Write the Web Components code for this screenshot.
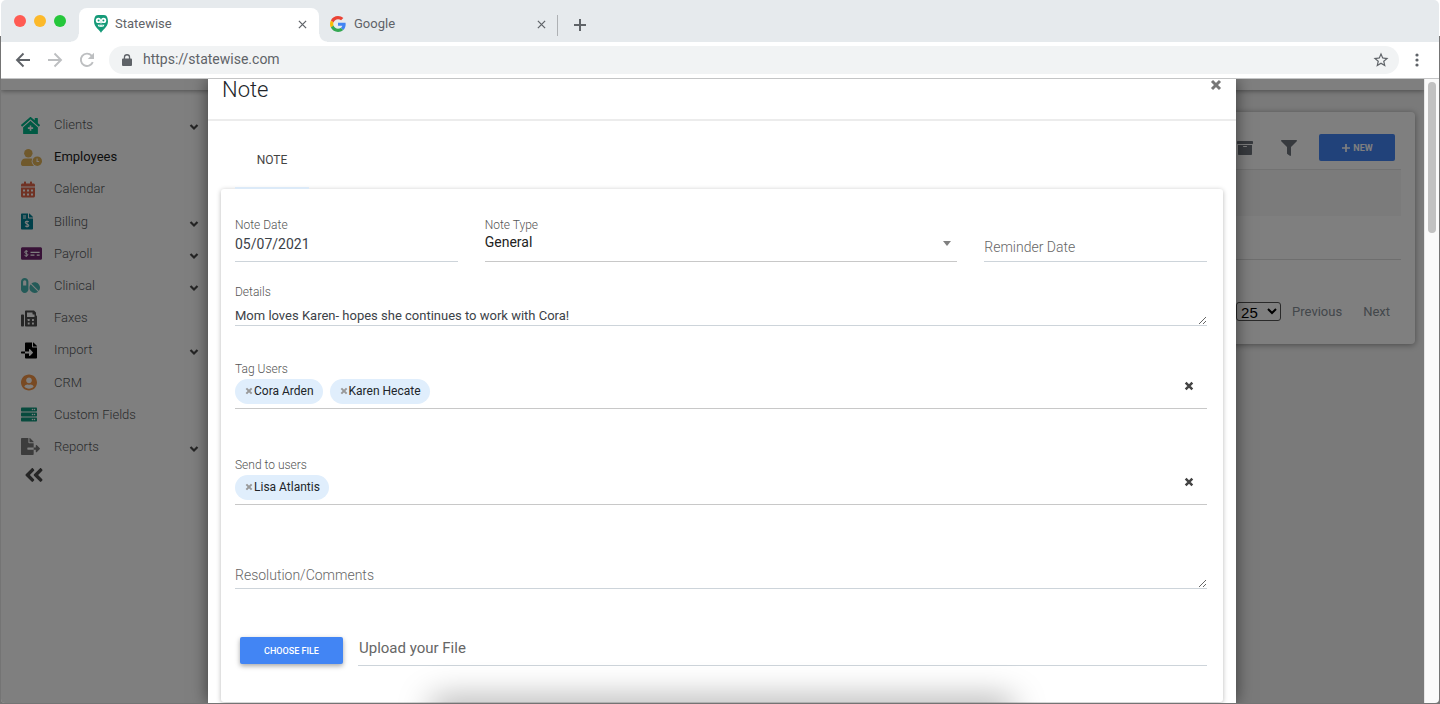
<!DOCTYPE html>
<html lang="en">
<head>
<meta charset="utf-8">
<title>Statewise</title>
<style>
  html, body { margin: 0; height: 100%; }
  body { font-family: Roboto, "Liberation Sans", sans-serif; font-size: 14px; color: #212529; overflow: hidden; background: #fff; }
</style>
</head>
<body>
<sw-window>
  <sw-tab slot="tabs" icon="owl" active>Statewise</sw-tab>
  <sw-tab slot="tabs" icon="google">Google</sw-tab>
  <sw-page>
    <sw-nav slot="nav">
      <sw-nav-item icon="clinic" tint="#00b488" more>Clients</sw-nav-item>
      <sw-nav-item icon="userclock" tint="#e0b258" current>Employees</sw-nav-item>
      <sw-nav-item icon="calendar" tint="#e06448">Calendar</sw-nav-item>
      <sw-nav-item icon="invoice" tint="#008094" more>Billing</sw-nav-item>
      <sw-nav-item icon="check" tint="#70246e" more>Payroll</sw-nav-item>
      <sw-nav-item icon="pills" tint="#49b5b0" more>Clinical</sw-nav-item>
      <sw-nav-item icon="fax" tint="#4c4c4c">Faxes</sw-nav-item>
      <sw-nav-item icon="import" tint="#000000" more>Import</sw-nav-item>
      <sw-nav-item icon="person" tint="#f29446">CRM</sw-nav-item>
      <sw-nav-item icon="server" tint="#11967c">Custom Fields</sw-nav-item>
      <sw-nav-item icon="export" tint="#787878" more>Reports</sw-nav-item>
    </sw-nav>
    <sw-list-card slot="main"></sw-list-card>
    <sw-modal slot="modal" heading="Note">
      <sw-note-form></sw-note-form>
    </sw-modal>
  </sw-page>
</sw-window>

<script>
const dollar = (x, y, s) => `<g transform="translate(${x} ${y}) scale(${s})" fill="none" stroke="#fff" stroke-width="34"><path d="M60-70C40-95-60-100-60-48S65-5 62 48 -45 95-65 62M0-120V120"/></g>`;
const dots = (xs, ys, s) => ys.map(y => xs.map(x => `<rect x="${x}" y="${y}" width="${s}" height="${s}" rx="8" fill="#fff"/>`).join('')).join('');
const ICONS = {
  clinic: ['0 0 576 512', '<path d="M288 115 69.500 307.700c-1.600 1.500-3.700 2.100-5.500 3.400V496a16 16 0 0 0 16 16h416a16 16 0 0 0 16-16V311.100c-1.700-1.200-3.700-1.800-5.300-3.200z"/><path d="M570.700 236.300 512 184.400V48a16 16 0 0 0-16-16h-64a16 16 0 0 0-16 16v51.700L314.800 10.300C308.500 4.600 296.500 0 288 0s-20.500 4.600-26.700 10.300l-256 226A18 18 0 0 0 0 248.200a18.600 18.600 0 0 0 4.100 10.700L25.500 282.700a21 21 0 0 0 12 5.300 18.700 18.700 0 0 0 10.700-4.100L277.300 81.600a16 16 0 0 1 21.200 0L527.900 283.900a18.200 18.200 0 0 0 22.600-1.400l21.300-23.800a21 21 0 0 0 4.200-10.600 18.600 18.600 0 0 0-5.300-11.800z"/><path d="M288 92 56 298" fill="none" stroke="#fff" stroke-width="16"/><path d="M288 92l232 206" fill="none" stroke="#fff" stroke-width="16"/><path d="M264 256h48v56h56v48h-56v56h-48v-56h-56v-48h56z" fill="#fff"/>'],
  userclock: ['0 0 640 512', '<circle cx="224" cy="128" r="128"/><path d="M0 464v-42c0-74 60-134 134-134h180c30 0 60 10 82 28v196H48c-26 0-48-22-48-48z"/><circle cx="496" cy="368" r="172" fill="#fff"/><circle cx="496" cy="368" r="144"/><path d="M490 290v86h62" fill="none" stroke="#fff" stroke-width="34"/>'],
  calendar: ['0 0 448 512', '<path d="M0 464c0 26.500 21.500 48 48 48h352c26.500 0 48-21.500 48-48V192H0zM400 64h-48V16c0-8.800-7.200-16-16-16h-32c-8.800 0-16 7.200-16 16v48H160V16c0-8.800-7.200-16-16-16h-32c-8.800 0-16 7.200-16 16v48H48C21.500 64 0 85.500 0 112v48h448v-48c0-26.500-21.500-48-48-48z"/>' + dots([64, 192, 320], [256, 384], 64)],
  invoice: ['0 0 384 512', '<path d="M377 105 279.100 7c-4.500-4.500-10.600-7-17-7H256v128h128v-6.100c0-6.300-2.500-12.400-7-16.900zM224 136V0H24C10.700 0 0 10.700 0 24v464c0 13.300 10.700 24 24 24h336c13.300 0 24-10.700 24-24V160H248c-13.200 0-24-10.800-24-24z"/><path d="M64 64h96v32H64zM64 128h96v32H64z" fill="#fff"/>' + dollar(192, 335, 0.95)],
  check: ['0 0 640 512', '<path d="M0 112c0-26 16-48 36-48h568c20 0 36 22 36 48v288c0 26-16 48-36 48H36c-20 0-36-22-36-48z"/><path d="M290 205h278v36H290zM290 290h120v34H290zM480 290h88v34h-88z" fill="#fff"/>' + dollar(160, 256, 0.85)],
  pills: ['0 0 576 512', '<path d="M112 32C50 32 0 82 0 144v224c0 62 50 112 112 112s112-50 112-112V144c0-62-50-112-112-112z"/><path d="M64 256V144a48 48 0 0 1 96 0v112z" fill="#fff"/><path d="M299.700 226.300c-3.500-3.500-9.500-3-12.400.8-45.500 62.400-40.400 150.100 15.900 206.400 56.300 56.300 144 61.400 206.400 15.900 4-2.900 4.300-8.900.8-12.400zm229.800-19c-56.300-56.300-144-61.400-206.400-15.900-4 2.900-4.300 8.900-.8 12.400l210.800 210.700c3.500 3.500 9.500 3 12.400-.8 45.400-62.300 40.300-150.100-16-206.400z"/>'],
  fax: ['0 0 512 512', '<path d="M64 128H32c-17.700 0-32 14.300-32 32v320c0 17.700 14.300 32 32 32h32c17.700 0 32-14.300 32-32V160c0-17.700-14.300-32-32-32zM480 160V77.300c0-8.500-3.400-16.600-9.400-22.600L425.400 9.400c-6-6-14.200-9.400-22.600-9.400H160c-17.700 0-32 14.300-32 32v448c0 17.700 14.300 32 32 32h320c17.700 0 32-14.300 32-32V192c0-17.700-14.300-32-32-32z"/><path d="M192 64h176v48c0 9 7 16 16 16h48v80H192z" fill="#fff"/>' + dots([216, 352], [272, 384], 60)],
  import: ['0 0 512 512', '<path d="M16 288c-8.800 0-16 7.200-16 16v32c0 8.800 7.200 16 16 16h112v-64zm489-183L407.100 7c-4.500-4.500-10.600-7-17-7H384v128h128v-6.100c0-6.300-2.500-12.400-7-16.900zm-153 31V0H152c-13.300 0-24 10.700-24 24v264h128v-65.200c0-14.300 17.300-21.400 27.400-11.300L379 308c6.600 6.700 6.600 17.400 0 24l-95.700 96.400c-10.100 10.100-27.400 3-27.400-11.300V352H128v136c0 13.300 10.700 24 24 24h336c13.300 0 24-10.700 24-24V160H376c-13.200 0-24-10.800-24-24z"/>'],
  person: ['0 0 496 512', '<path d="M248 8C111 8 0 119 0 256s111 248 248 248 248-111 248-248S385 8 248 8zm0 96c48.600 0 88 39.400 88 88s-39.400 88-88 88-88-39.400-88-88 39.400-88 88-88zm0 344c-58.700 0-111.300-26.600-146.500-68.200 18.800-35.400 55.600-59.800 98.500-59.800 2.400 0 4.800.4 7.100 1.100 13 4.200 26.600 6.900 40.900 6.900 14.300 0 28-2.700 40.900-6.900 2.300-.7 4.700-1.100 7.100-1.100 42.900 0 79.700 24.400 98.500 59.800C359.300 421.400 306.700 448 248 448z"/>'],
  server: ['0 0 512 512', [32, 192, 352].map(y => `<rect y="${y}" width="512" height="128" rx="26"/><circle cx="368" cy="${y + 64}" r="24" fill="#fff"/><circle cx="432" cy="${y + 64}" r="24" fill="#fff"/>`).join('')],
  export: ['0 0 576 512', '<path d="M384 121.900c0-6.300-2.500-12.400-7-16.900L279.100 7c-4.500-4.500-10.600-7-17-7H256v128h128zM571 308l-95.700-96.400c-10.100-10.100-27.400-3-27.400 11.300V288h-64v64h64v65.200c0 14.300 17.300 21.400 27.400 11.300L571 332c6.600-6.600 6.600-17.400 0-24zm-379 28v-32c0-8.800 7.200-16 16-16h176V160H248c-13.200 0-24-10.800-24-24V0H24C10.700 0 0 10.700 0 24v464c0 13.300 10.700 24 24 24h336c13.300 0 24-10.700 24-24V352H208c-8.800 0-16-7.200-16-16z"/>'],
  collapse: ['0 0 448 512', '<path d="M223.700 239l136-136c9.400-9.400 24.600-9.400 33.900 0l22.600 22.600c9.400 9.400 9.400 24.600 0 33.900L319.900 256l96.400 96.400c9.400 9.400 9.400 24.600 0 33.900L393.700 409c-9.400 9.400-24.600 9.400-33.900 0l-136-136c-9.500-9.400-9.500-24.600-.1-34zm-192 34l136 136c9.400 9.400 24.600 9.400 33.900 0l22.600-22.600c9.400-9.400 9.400-24.600 0-33.900L127.900 256l96.400-96.400c9.400-9.400 9.400-24.600 0-33.900L201.700 103c-9.400-9.400-24.600-9.400-33.900 0l-136 136c-9.500 9.400-9.500 24.600-.1 34z"/>'],
  chevron: ['0 0 10 10', '<path d="M1.500 3 5 6.500 8.500 3" fill="none" stroke="currentColor" stroke-width="2.200"/>'],
  archive: ['0 0 512 512', '<path d="M32 448c0 17.700 14.300 32 32 32h384c17.700 0 32-14.300 32-32V160H32zM480 32H32C14.300 32 0 46.300 0 64v48c0 8.800 7.200 16 16 16h480c8.800 0 16-7.200 16-16V64c0-17.700-14.300-32-32-32z"/><rect x="192" y="192" width="128" height="34" rx="12" fill="#fff"/>'],
  filter: ['0 0 512 512', '<path d="M487.976 0H24.028C2.710 0-8.047 25.866 7.058 40.971L192 225.941V432c0 7.831 3.821 15.170 10.237 19.662l80 55.980C298.020 518.690 320 507.493 320 487.980V225.941l184.947-184.970C520.021 25.896 509.338 0 487.976 0z"/>'],
  plusbold: ['0 0 10 10', '<path d="M5 1v8M1 5h8" fill="none" stroke="currentColor" stroke-width="1.700"/>'],
  timesbold: ['0 0 12 12', '<path d="M2 2l8 8M10 2l-8 8" fill="none" stroke="currentColor" stroke-width="3"/>'],
  close: ['0 0 10 10', '<path d="M1 1l8 8M9 1 1 9" fill="none" stroke="currentColor" stroke-width="1.400"/>'],
  plus: ['0 0 12 12', '<path d="M6 0v12M0 6h12" fill="none" stroke="currentColor" stroke-width="2"/>'],
  back: ['0 0 16 16', '<path d="M15 8H2M8.500 1.500 2 8l6.500 6.500" fill="none" stroke="currentColor" stroke-width="1.900"/>'],
  forward: ['0 0 16 16', '<path d="M1 8h13M7.500 1.500 14 8l-6.500 6.500" fill="none" stroke="currentColor" stroke-width="1.900"/>'],
  reload: ['0 0 16 16', '<path d="M13.800 10.200A6.200 6.200 0 1 1 12.600 3.600L14 5" fill="none" stroke="currentColor" stroke-width="1.900"/><path d="M15 .8V7H8.800z"/>'],
  lock: ['0 0 10 12', '<path d="M1.800 4.500V3.300a3.200 3.200 0 0 1 6.400 0v1.200H9a1 1 0 0 1 1 1V11a1 1 0 0 1-1 1H1a1 1 0 0 1-1-1V5.500a1 1 0 0 1 1-1zm1.300 0h3.800V3.300a1.900 1.900 0 0 0-3.800 0z" fill-rule="evenodd"/>'],
  star: ['0 0 24 24', '<path d="M22 9.240l-7.190-.62L12 2 9.190 8.630 2 9.240l5.460 4.730L5.820 21 12 17.270 18.180 21l-1.630-7.030zM12 15.400l-3.760 2.270 1-4.280-3.320-2.880 4.380-.38L12 6.100l1.710 4.040 4.380.38-3.320 2.880 1 4.280z"/>'],
  menu: ['0 0 4 14', '<circle cx="2" cy="2" r="1.600"/><circle cx="2" cy="7" r="1.600"/><circle cx="2" cy="12" r="1.600"/>'],
  google: ['0 0 48 48', '<path fill="#EA4335" d="M24 9.500c3.540 0 6.710 1.220 9.210 3.600l6.850-6.850C35.900 2.380 30.470 0 24 0 14.620 0 6.510 5.380 2.560 13.220l7.980 6.190C12.430 13.720 17.740 9.500 24 9.500z"/><path fill="#4285F4" d="M46.980 24.550c0-1.570-.15-3.090-.38-4.550H24v9.020h12.940c-.58 2.960-2.260 5.480-4.780 7.180l7.730 6c4.510-4.180 7.090-10.360 7.090-17.650z"/><path fill="#FBBC05" d="M10.530 28.590c-.48-1.450-.76-2.990-.76-4.590s.27-3.140.76-4.590l-7.980-6.190C.92 16.460 0 20.120 0 24c0 3.880.92 7.540 2.560 10.780z"/><path fill="#34A853" d="M24 48c6.480 0 11.930-2.130 15.890-5.810l-7.730-6c-2.150 1.450-4.920 2.300-8.160 2.300-6.260 0-11.570-4.220-13.470-9.910l-7.980 6.190C6.510 42.620 14.620 48 24 48z"/>'],
  owl: ['0 0 14 18', '<path d="M7 18C6.500 15.500 0 12.500 0 6.500 0 3 1.200 1.200 2 .5L4 .1h6l2 .4c.8.700 2 2.500 2 6C14 12.500 7.500 15.500 7 18z" fill="#159a78"/><circle cx="4.400" cy="5.400" r="2.600" fill="#fff"/><circle cx="9.600" cy="5.400" r="2.600" fill="#fff"/><circle cx="4.600" cy="5.600" r="1" fill="#159a78"/><circle cx="9.400" cy="5.600" r="1" fill="#159a78"/><path d="M6 7h2l-1 2z" fill="#fff"/><path d="M3.500 9.800h7L9 12H5z" fill="#fff"/><path d="M5.500 10.500v1M7 10.500v1M8.500 10.500v1" stroke="#159a78" stroke-width=".7"/>']
};

/* Base class: clones the element's template into an open shadow root. */
class SwElement extends HTMLElement {
  connectedCallback() {
    if (this.shadowRoot) return;
    const t = document.createElement('template');
    t.innerHTML = `<style>*{box-sizing:border-box}button{font:inherit;color:inherit;background:none;border:0;padding:0;margin:0;display:inline-flex;align-items:center;justify-content:center}input,select,textarea{font:inherit;color:inherit;border-radius:0;outline:0;margin:0}</style>` + this.render();
    this.attachShadow({ mode: 'open' }).append(t.content.cloneNode(true));
  }
  attr(n) { return this.getAttribute(n) || ''; }
}

customElements.define('sw-icon', class extends SwElement {
  render() {
    const [box, body] = ICONS[this.attr('name')];
    return `<style>:host{display:inline-flex;flex:none}svg{display:block;width:100%;height:100%}</style>
      <svg viewBox="${box}" fill="currentColor" aria-hidden="true">${body}</svg>`;
  }
});

customElements.define('sw-tab', class extends SwElement {
  render() {
    return `<style>
      :host{display:flex;flex:none;align-items:center;width:240px;height:34px;padding:0 12px 2px 14px;box-sizing:border-box;position:relative;color:#5f6368;font-size:13px;line-height:16px}
      :host([active]){background:#fff;border-radius:8px 8px 0 0}
      :host(:not([active])){padding-left:11px;padding-right:11px;width:238px}
      :host([active])::before,:host([active])::after{content:"";position:absolute;bottom:0;width:8px;height:8px}
      :host([active])::before{left:-8px;background:radial-gradient(circle at 0 0,transparent 7px,#fff 8px)}
      :host([active])::after{right:-8px;background:radial-gradient(circle at 100% 0,transparent 7px,#fff 8px)}
      .fav{width:16px;height:18px;margin-right:6px}
      :host(:not([active])) .fav{margin-right:8px}
      .name{flex:1}
      button sw-icon{width:9px;height:9px}
      </style>
      <sw-icon class="fav" name="${this.attr('icon')}"></sw-icon><span class="name"><slot></slot></span>
      <button aria-label="Close tab"><sw-icon name="close"></sw-icon></button>`;
  }
});

customElements.define('sw-window', class extends SwElement {
  render() {
    return `<style>
      :host{display:flex;flex-direction:column;height:100vh;box-sizing:border-box;padding:0 1px 1px;background:linear-gradient(#fff 36px,#747474 36px)}
      .strip{display:flex;flex:none;height:42px;background:#e6eaed;border-radius:5px 5px 0 0;align-items:flex-end}
      .lights{display:flex;gap:8px;align-self:center;padding:0 19px 0 13px;width:78px}
      .lights i{width:12px;height:12px;border-radius:50%;flex:none}
      .sep{width:1px;height:21px;background:#aeb1b4;margin-bottom:6px}
      .add{height:34px;width:44px;color:#5f6368}
      .add sw-icon{width:12px;height:12px}
      .bar{display:flex;flex:none;height:37px;background:#fff;border-bottom:1px solid #c4c5c6;align-items:center;padding:0 20px 0 14px;color:#5f6368}
      .bar button{width:16px;height:16px}
      .bar button+button{margin-left:16px}
      .dim{color:#bdbfc1}
      .bar sw-icon{width:16px;height:16px}
      .omni{flex:1;display:flex;align-items:center;height:28px;border-radius:14px;background:#f1f3f4;margin:0 16px 0 14px;padding:0 10px 0 13px}
      .omni sw-icon{width:10px;height:12px}
      .omni input{flex:1;min-width:0;border:0;background:none;padding:0 0 2px 11px;font-size:14px;height:20px}
      .omni .star sw-icon{width:18px;height:18px}
      .bar .menu{width:4px;height:14px}
      .bar .menu sw-icon{width:4px;height:14px}
      </style>
      <div class="strip"><div class="lights"><i style="background:#ff5b53"></i><i style="background:#fcb92a"></i><i style="background:#25c73b"></i></div>
        <slot name="tabs"></slot><span class="sep"></span><button class="add" aria-label="New tab"><sw-icon name="plus"></sw-icon></button></div>
      <div class="bar"><button aria-label="Back"><sw-icon name="back"></sw-icon></button><button class="dim" aria-label="Forward"><sw-icon name="forward"></sw-icon></button><button class="dim" aria-label="Reload"><sw-icon name="reload"></sw-icon></button>
        <div class="omni"><sw-icon name="lock"></sw-icon><input type="text" aria-label="Address" value="https://statewise.com"><button class="star" aria-label="Bookmark"><sw-icon name="star"></sw-icon></button></div>
        <button class="menu" aria-label="Menu"><sw-icon name="menu"></sw-icon></button></div>
      <slot></slot>`;
  }
});

customElements.define('sw-page', class extends SwElement {
  render() {
    return `<style>
      :host{display:flex;flex:1;min-height:0;overflow:hidden;border-radius:0 0 4px 4px}
      .view{flex:1;min-width:0;position:relative;overflow:hidden;display:grid;grid-template:11px 1fr / 207px 1fr;background:#fff}
      .top{grid-column:1/3;background:#fff;box-shadow:0 1px 5px rgba(0,0,0,.4);z-index:1}
      .main{background:#f4f4f4;padding:22px 9px 0 14px}
      .cover{position:absolute;inset:0;z-index:2;background:rgba(0,0,0,.5);padding:0 188px 0 207px;display:flex}
      .track{width:15px;background:#fafafa;border-left:1px solid #e6e6e6;padding:3px 3px 0}
      .thumb{height:151px;border-radius:4px;background:#c1c1c1}
      </style>
      <div class="view"><div class="top"></div><slot name="nav"></slot><div class="main"><slot name="main"></slot></div>
        <div class="cover"><slot name="modal"></slot></div></div>
      <div class="track"><div class="thumb"></div></div>`;
  }
});

customElements.define('sw-nav', class extends SwElement {
  render() {
    return `<style>
      :host{display:block;padding-top:19px}
      nav{display:grid;grid-auto-rows:1fr;height:354px}
      button{margin:1px 0 0 22px;width:22px;height:22px;color:#4a4a4a}
      button sw-icon{width:22px;height:22px}
      </style><nav><slot></slot></nav><button aria-label="Collapse menu"><sw-icon name="collapse"></sw-icon></button>`;
  }
});

customElements.define('sw-nav-item', class extends SwElement {
  render() {
    const narrow = { invoice: 12, calendar: 14, fax: 16, import: 16, person: 16, server: 16, clinic: 19, export: 19, pills: 19 };
    const w = narrow[this.attr('icon')] || 21;
    return `<style>
      :host{display:flex}
      a{flex:1;display:flex;align-items:center;padding:0 9px 0 20px;color:#55585a;text-decoration:none;font-weight:300;font-size:13px;line-height:16px}
      :host([current]) a{color:#1c1c1c;font-weight:400}
      .slot{width:33px;color:${this.attr('tint')};display:flex}
      .slot sw-icon{width:${w}px;height:17px}
      .name{flex:1}
      .go{width:10px;height:10px;color:#4a4a4a;margin-top:4px}
      </style><a href="#"><span class="slot"><sw-icon name="${this.attr('icon')}"></sw-icon></span><span class="name"><slot></slot></span>${this.hasAttribute('more') ? '<sw-icon class="go" name="chevron"></sw-icon>' : ''}</a>`;
  }
});

customElements.define('sw-list-card', class extends SwElement {
  render() {
    return `<style>
      :host{display:block;background:#fff;border-radius:4px;box-shadow:0 1px 6px rgba(0,0,0,.4);padding:22px 14px 23px}
      .tools{display:flex;justify-content:flex-end;align-items:center;padding-right:6px;height:27px}
      .tools .ic{width:16px;height:16px;color:#6e757d;margin-right:28px}
      .tools .ic:nth-child(2){margin-right:22px}
      .tools .ic sw-icon{width:16px;height:16px}
      .new{background:#4285f4;color:#fff;width:76px;height:27px;border-radius:2px;font-size:9px;font-weight:700;gap:2px}
      .new sw-icon{width:10px;height:10px}
      .head{height:47px;margin-top:8px;background:#f7f7f7;border-top:1px solid #e4e4e4}
      .row{height:44px;border-bottom:1px solid #ddd}
      .pager{display:flex;justify-content:flex-end;align-items:center;padding-right:11px;margin-top:42px;height:19px;color:#868e96;font-size:13px}
      select{width:45px;height:19px;font-family:"Liberation Sans",sans-serif;font-size:15px;line-height:16px;padding:0;border:1px solid #555;border-radius:3px;background:#fff;color:#000}
      a{color:inherit;text-decoration:none}
      select+a{margin:0 21px 0 11px}
      </style>
      <div class="tools"><button class="ic" aria-label="Archive"><sw-icon name="archive"></sw-icon></button><button class="ic" aria-label="Filter"><sw-icon name="filter"></sw-icon></button>
        <button class="new"><sw-icon name="plusbold"></sw-icon><span>NEW</span></button></div>
      <div class="head"></div><div class="row"></div>
      <div class="pager"><select aria-label="Rows per page"><option>25</option></select><a href="#">Previous</a><a href="#">Next</a></div>`;
  }
});

customElements.define('sw-modal', class extends SwElement {
  render() {
    return `<style>
      :host{display:block;flex:1;min-width:0;background:#fff;box-shadow:0 0 16px rgba(0,0,0,.55);position:relative}
      header{display:flex;justify-content:space-between;height:42px;padding:0 14px;border-bottom:2px solid #ececec}
      h2{margin:0;font-weight:300;font-size:22px;line-height:22px}
      header button{width:12px;height:12px;color:#777}
      header sw-icon{width:12px;height:12px}
      .tabs{display:flex;padding:0 27px;height:68px}
      .tabs button{width:74px;margin-top:12px;height:56px;font-size:12px;color:#444;border-bottom:2px solid #dceaf8}
      .body{padding:0 13px}
      .fade{position:absolute;left:22%;right:22%;bottom:-14px;height:14px;border-radius:7px;box-shadow:0 0 32px 5px rgba(0,0,0,.34);pointer-events:none}
      </style>
      <header><h2>${this.attr('heading')}</h2><button aria-label="Close"><sw-icon name="timesbold"></sw-icon></button></header>
      <div class="tabs"><button>NOTE</button></div>
      <div class="body"><slot></slot></div><div class="fade"></div>`;
  }
});

const FIELD = `
  :host{display:block;min-width:0}
  label{display:block;font-size:12px;line-height:16px;font-weight:300;color:#555}
  input,select,textarea{display:block;width:100%;border:0;border-bottom:1px solid #cdd4da;background:none;padding:0;color:#3c4248}
  ::placeholder{color:#666;opacity:1}`;

customElements.define('sw-field', class extends SwElement {
  render() {
    const label = this.attr('label'), hint = this.attr('hint');
    return `<style>${FIELD}
      input{height:29px;padding-bottom:6px;font-size:14px}
      :host([hint]) input{margin-top:16px;padding-bottom:0;font-weight:300}
      :host([flat]) input{margin-top:0;padding:0 0 6px 1px;font-size:15px;font-weight:400}
      </style>${label ? `<label for="f">${label}</label>` : ''}<input id="f" type="text" value="${this.attr('value')}" ${hint ? `placeholder="${hint}" aria-label="${hint}"` : ''}>`;
  }
});

customElements.define('sw-select', class extends SwElement {
  render() {
    return `<style>${FIELD}
      .wrap{display:grid;align-items:center}
      .wrap>*{grid-area:1/1}
      select{appearance:none;height:29px;padding-bottom:10px;font-size:14px;border-color:#c8c8c8;color:#222}
      i{justify-self:end;margin:0 6px 8px;border:4px solid transparent;border-top:5px solid #808080;border-bottom:0;pointer-events:none}
      </style><label for="f">${this.attr('label')}</label><div class="wrap"><select id="f"><option>${this.attr('value')}</option></select><i></i></div>`;
  }
});

customElements.define('sw-area', class extends SwElement {
  render() {
    const label = this.attr('label'), hint = this.attr('hint');
    return `<style>${FIELD}
      textarea{height:26px;resize:vertical;overflow:hidden;padding-top:7px;font-size:13px;line-height:18px}
      :host([hint]) textarea{padding-top:3px;font-size:14px;font-weight:300}
      </style>${label ? `<label for="f">${label}</label>` : ''}<textarea id="f" ${hint ? `placeholder="${hint}" aria-label="${hint}"` : ''}>${this.attr('value')}</textarea>`;
  }
});

customElements.define('sw-chip', class extends SwElement {
  render() {
    return `<style>
      :host{display:flex;align-items:center;gap:1px;height:25px;box-sizing:border-box;padding:0 9px 1px 10px;border-radius:13px;background:#e0eefc;font-size:12px;line-height:16px;color:#212529}
      button{width:8px;height:8px;color:#999}
      sw-icon{width:8px;height:8px}
      </style><button aria-label="Remove"><sw-icon name="timesbold"></sw-icon></button><span><slot></slot></span>`;
  }
});

customElements.define('sw-tags', class extends SwElement {
  render() {
    return `<style>${FIELD}
      .box{display:flex;gap:7px;padding:2px 13px 4px 0;border-bottom:1px solid #c8c8c8}
      button{width:10px;height:10px;margin:2px 0 0 auto;color:#444}
      sw-icon{width:10px;height:10px}
      </style><label id="l">${this.attr('label')}</label><div class="box" role="group" aria-labelledby="l"><slot></slot><button aria-label="Clear"><sw-icon name="timesbold"></sw-icon></button></div>`;
  }
});

customElements.define('sw-note-form', class extends SwElement {
  render() {
    return `<style>
      :host{display:block}
      form{padding:28px 16px 36px 14px;background:#fff;border-radius:3px;box-shadow:0 1px 5px rgba(0,0,0,.28);display:flex;flex-direction:column}
      .row{display:grid;grid-template-columns:repeat(12,1fr);column-gap:27px;margin-bottom:22px}
      .q{grid-column:span 3}.h{grid-column:span 6}
      .details{margin-bottom:35px}
      .tag{margin-bottom:48px}
      .send{margin-bottom:58px}
      .notes{margin-bottom:48px}
      .file{display:flex;gap:15px;padding-left:5px}
      .file button{width:103px;height:27px;background:#4285f4;color:#fff;font-size:9px;font-weight:500;border-radius:2px;box-shadow:0 2px 5px rgba(0,0,0,.35)}
      .file sw-field{flex:1}
      </style>
      <form>
        <div class="row"><sw-field class="q" label="Note Date" value="05/07/2021"></sw-field><sw-select class="h" label="Note Type" value="General"></sw-select><sw-field class="q" hint="Reminder Date"></sw-field></div>
        <sw-area class="details" label="Details" value="Mom loves Karen- hopes she continues to work with Cora!"></sw-area>
        <sw-tags class="tag" label="Tag Users"><sw-chip>Cora Arden</sw-chip><sw-chip>Karen Hecate</sw-chip></sw-tags>
        <sw-tags class="send" label="Send to users"><sw-chip>Lisa Atlantis</sw-chip></sw-tags>
        <sw-area class="notes" hint="Resolution/Comments"></sw-area>
        <div class="file"><button type="button">CHOOSE FILE</button><sw-field flat hint="Upload your File"></sw-field></div>
      </form>`;
  }
});
</script>
</body>
</html>
